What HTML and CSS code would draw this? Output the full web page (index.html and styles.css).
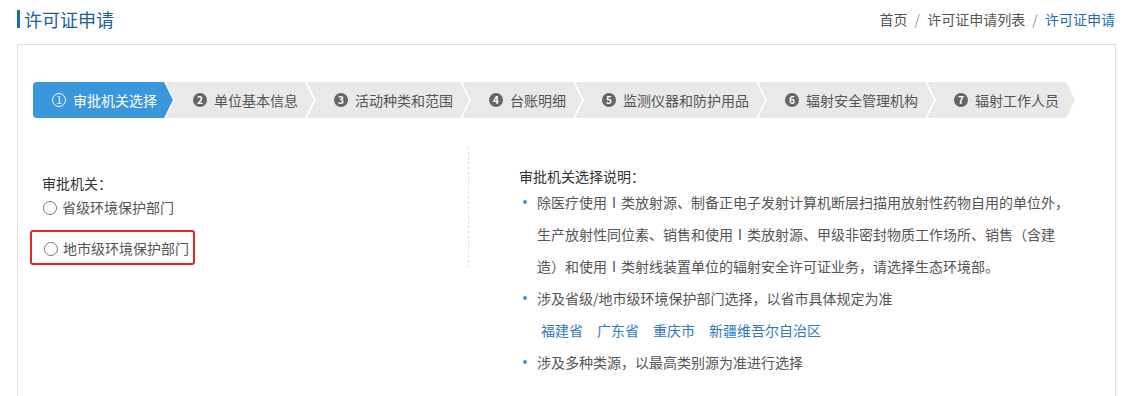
FILE: index.html
```html
<!DOCTYPE html>
<html lang="zh-CN">
<head>
    <meta charset="UTF-8">
    <meta name="viewport" content="width=device-width, initial-scale=1.0">
    <title>许可证申请</title>
    <link rel="stylesheet" href="styles.css">
</head>

<body>
    <div class="page-head">
        <h1 class="page-title">许可证申请</h1>
        <div class="crumbs">
            <a href="#">首页</a>
            <span class="sep">/</span>
            <a href="#">许可证申请列表</a>
            <span class="sep">/</span>
            <span class="current">许可证申请</span>
        </div>
    </div>

    <div class="panel">
        <ul class="steps">
            <li class="step active"><span class="num">1</span>审批机关选择</li>
            <li class="step"><span class="num">2</span>单位基本信息</li>
            <li class="step"><span class="num">3</span>活动种类和范围</li>
            <li class="step"><span class="num">4</span>台账明细</li>
            <li class="step"><span class="num">5</span>监测仪器和防护用品</li>
            <li class="step"><span class="num">6</span>辐射安全管理机构</li>
            <li class="step"><span class="num">7</span>辐射工作人员</li>
        </ul>

        <div class="content">
            <div class="choose">
                <div class="label">审批机关：</div>
                <label class="option">
                    <input type="radio" name="org">省级环境保护部门
                </label>
                <label class="option marked">
                    <input type="radio" name="org">地市级环境保护部门
                </label>
            </div>

            <div class="notes">
                <div class="notes-title">审批机关选择说明：</div>
                <ul class="note-list">
                    <li>除医疗使用Ⅰ类放射源、制备正电子发射计算机断层扫描用放射性药物自用的单位外，生产放射性同位素、销售和使用Ⅰ类放射源、甲级非密封物质工作场所、销售（含建造）和使用Ⅰ类射线装置单位的辐射安全许可证业务，请选择生态环境部。</li>
                    <li>涉及省级/地市级环境保护部门选择，以省市具体规定为准
                        <div class="links">
                            <a href="#">福建省</a>
                            <a href="#">广东省</a>
                            <a href="#">重庆市</a>
                            <a href="#">新疆维吾尔自治区</a>
                        </div>
                    </li>
                    <li>涉及多种类源，以最高类别源为准进行选择</li>
                </ul>
            </div>
        </div>
    </div>
</body>
</html>
```

FILE: styles.css
```css
*{
    font-family: "Noto Sans CJK SC", "Noto Sans", sans-serif;
    box-sizing: border-box;
}
body{
    margin: 0;
    padding: 0 13px 0 17px;
    background: #fff;
    color: #555;
    font-size: 14px;
    text-spacing-trim: space-all;
}
a{
    text-decoration: none;
}
.page-head{
    height: 44px;
    display: flex;
    align-items: center;
    justify-content: space-between;
    padding-bottom: 6px;
}
.page-title{
    margin: 0;
    font-size: 18px;
    font-weight: normal;
    color: #1b5e9f;
    line-height: 18px;
    border-left: 3px solid #1a6db5;
    padding-left: 4px;
}
.crumbs{
    font-size: 14px;
    line-height: 20px;
    padding-right: 1px;
}
.crumbs a{
    color: #555;
}
.crumbs .sep{
    color: #999;
    margin: 0 4px;
}
.crumbs .current{
    color: #1d6db5;
}
.panel{
    border: 1px solid #ddd;
    border-bottom: none;
    height: 352px;
    padding: 37px 15px 0 15px;
}
.steps{
    list-style: none;
    margin: 0;
    padding: 0;
    display: flex;
}
.step{
    height: 36px;
    line-height: 36px;
    background: #e9e9e9;
    color: #555;
    padding: 0 16px 0 27px;
    margin-left: -7px;
    display: flex;
    align-items: center;
    gap: 7px;
    white-space: nowrap;
    clip-path: polygon(0 0, calc(100% - 9px) 0, 100% 50%, calc(100% - 9px) 100%, 0 100%, 9px 50%);
}
.step.active{
    margin-left: 0;
    padding-left: 19px;
    background: #3a97dc;
    color: #fff;
    border-radius: 4px 0 0 4px;
    clip-path: polygon(0 0, calc(100% - 9px) 0, 100% 50%, calc(100% - 9px) 100%, 0 100%);
}
.num{
    width: 14px;
    height: 14px;
    border-radius: 50%;
    background: #666;
    color: #fff;
    font-size: 10px;
    font-weight: bold;
    line-height: 14px;
    text-align: center;
}
.step.active .num{
    background: none;
    border: 1.5px solid #fff;
    font-weight: normal;
    line-height: 11px;
}
.content{
    display: flex;
    align-items: flex-start;
    margin-top: 29px;
}
.choose{
    width: 436px;
    height: 121px;
    border-right: 1px dashed #e2e2e2;
    padding: 26px 0 0 9px;
}
.label{
    color: #333;
    line-height: 20px;
    margin-bottom: 3px;
}
.option{
    display: flex;
    align-items: center;
    gap: 5px;
    line-height: 22px;
    color: #555;
}
.option input{
    appearance: none;
    margin: 2px 0 0 1px;
    width: 14px;
    height: 14px;
    border: 1px solid #777;
    border-radius: 50%;
    background: #fff;
}
.option.marked{
    width: 165px;
    height: 35px;
    margin: 12px 0 0 -12px;
    padding-left: 11px;
    border: 2px solid #e3282a;
    border-radius: 3px;
}
.notes{
    padding: 19px 0 0 50px;
}
.notes-title{
    color: #333;
    line-height: 20px;
}
.note-list{
    list-style: none;
    margin: 0;
    padding: 0 0 0 18px;
    width: 560px;
}
.note-list li{
    position: relative;
    line-height: 32px;
    width: 540px;
}
.note-list li::before{
    content: "";
    position: absolute;
    left: -14px;
    top: 14px;
    width: 4px;
    height: 4px;
    border-radius: 50%;
    background: #3a97dc;
}
.links{
    display: flex;
    gap: 14px;
    padding-left: 4px;
}
.links a{
    color: #3179bd;
}
```
